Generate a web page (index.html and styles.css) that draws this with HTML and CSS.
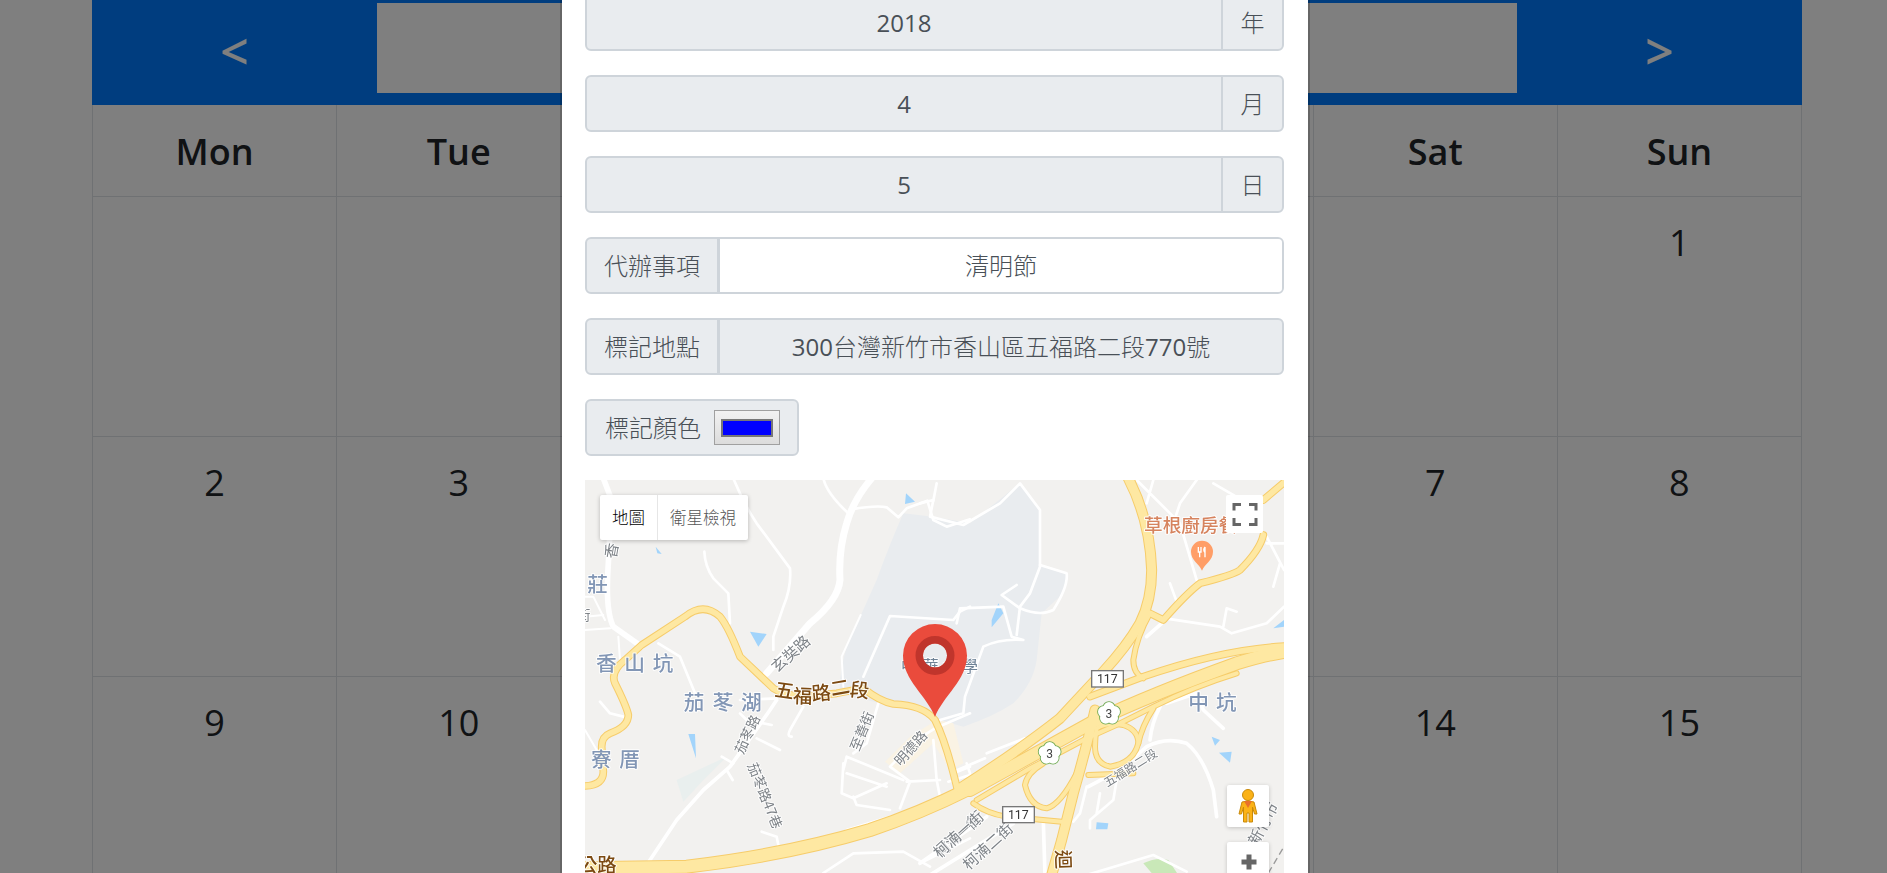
FILE: index.html
```html
<!DOCTYPE html>
<html lang="zh-Hant">
<head>
<meta charset="utf-8">
<title>行事曆</title>
<link rel="stylesheet" href="styles.css">
</head>
<body>
<main class="calendar">
  <header class="cal-head">
    <div class="cal-nav">&lt;</div>
    <div class="cal-title"></div>
    <div class="cal-nav">&gt;</div>
  </header>
  <section class="cal-grid">
    <div class="cell head">Mon</div><div class="cell head">Tue</div><div class="cell head">Wed</div><div class="cell head">Thu</div><div class="cell head">Fri</div><div class="cell head">Sat</div><div class="cell head">Sun</div>
    <div class="cell"></div><div class="cell"></div><div class="cell"></div><div class="cell"></div><div class="cell"></div><div class="cell"></div><div class="cell">1</div>
    <div class="cell">2</div><div class="cell">3</div><div class="cell">4</div><div class="cell">5</div><div class="cell">6</div><div class="cell">7</div><div class="cell">8</div>
    <div class="cell">9</div><div class="cell">10</div><div class="cell">11</div><div class="cell">12</div><div class="cell">13</div><div class="cell">14</div><div class="cell">15</div>
  </section>
</main>

<div class="backdrop"></div>

<div class="modal">
  <div class="modal-content">
    <div class="field"><div class="value num">2018</div><div class="addon addon-end">年</div></div>
    <div class="field"><div class="value num">4</div><div class="addon addon-end">月</div></div>
    <div class="field"><div class="value num">5</div><div class="addon addon-end">日</div></div>
    <div class="field"><div class="addon addon-start">代辦事項</div><div class="value value-edit">清明節</div></div>
    <div class="field"><div class="addon addon-start">標記地點</div><div class="value"><span class="num">300</span>台灣新竹市香山區五福路二段<span class="num">770</span>號</div></div>
    <div class="field field-color">
      <div class="addon addon-color">標記顏色<span class="swatch-btn"><span class="swatch"></span></span></div>
    </div>

    <div class="map">
      <svg class="map-canvas" width="699" height="393" viewBox="585 480 699 393" xmlns="http://www.w3.org/2000/svg">
        <defs>
          <g id="yroads">
            <g transform="translate(570 480) scale(.33333)">
              <path class="t2" d="M45 918Q100 915 100 875L95 800Q95 770 120 760Q175 740 175 705Q170 680 135 610Q120 575 165 540L215 495L345 410Q400 365 450 410Q475 440 510 530L610 625Q640 645 700 650L800 640L880 625Q930 665 970 672Q1060 675 1095 720Q1130 790 1165 940"/>
              <path class="t4" d="M45 1165L350 1160Q650 1125 900 1050Q1050 1000 1200 925"/>
            </g>
            <g transform="translate(920 480) scale(.33333)">
              <path class="t3" d="M625 -5Q690 120 695 270Q695 360 660 430Q620 500 550 575L420 715Q300 810 120 925"/>
              <path class="t1" d="M690 400Q650 470 640 540Q640 580 670 595"/>
              <path class="t2" d="M1095 498Q900 510 670 590L510 650"/>
              <path class="t4" d="M150 930L520 725Q700 640 950 550Q1030 525 1095 515"/>
              <path class="t1" d="M950 580Q820 620 700 680L600 730L500 775L330 865L170 960"/>
              <path class="t3" d="M525 690Q500 800 460 940L425 1080L395 1185"/>
              <path class="t1" d="M530 745Q560 725 610 735Q655 750 655 790Q640 850 570 860Q525 850 525 800Q525 775 530 745"/>
              <path class="t1" d="M700 685Q665 740 655 790"/>
              <path class="t1" d="M505 885L640 880"/>
              <path class="t1" d="M370 850Q320 880 315 915Q330 980 380 985Q420 975 470 880"/>
              <path class="t1" d="M160 970Q200 1000 260 1010L425 1025"/>
              <path class="t2" d="M1030 165Q1020 210 960 270Q940 285 840 310Q800 340 730 420L690 400"/>
              <path class="t2" d="M1095 5L1030 60"/>
            </g>
          </g>
          <g id="flower">
            <circle cx="0" cy="-17" r="17"/><circle cx="16" cy="-5" r="17"/><circle cx="10" cy="14" r="17"/><circle cx="-10" cy="14" r="17"/><circle cx="-16" cy="-5" r="17"/>
          </g>
        </defs>

        <rect class="land" x="585" y="480" width="699" height="393"/>

        <g transform="translate(920 480) scale(.33333)">
          <path class="campus" d="M-50 100Q-90 190 -130 300L-220 500Q-245 590 -240 640L-120 670L-10 690L60 720L130 740Q220 710 280 670Q340 610 350 540L365 400L430 340L445 285L360 255L360 90L300 10L150 130L40 110Z"/>
          <path class="campus-warm" d="M-105 845L-30 770L50 720L100 730L130 850L90 870L40 790L-60 880Z"/>
          <path class="green" d="M670 1150Q710 1130 745 1140L775 1185H700Z"/>
          <path class="water" d="M235 370L250 400L215 442L215 420ZM875 770L900 780L885 797ZM897 818L935 815L930 848ZM530 1027L565 1030L562 1048L528 1048ZM1060 445L1092 420V440Z"/>
        </g>
        <g transform="translate(570 480) scale(.33333)">
          <path class="water" d="M540 455L590 462L565 500ZM355 762L375 762L378 835ZM1008 40L1035 65L1005 72ZM257 200L275 222L262 220Z"/>
          <path class="marsh" d="M320 900L470 830L400 900L340 965Z"/>
        </g>

        <g class="wroads" transform="translate(570 480) scale(.33333)">
          <path class="w4" d="M100 -5L125 60L115 250Q105 390 130 440L215 500"/>
          <path class="w5" d="M905 -5Q850 60 830 130Q805 210 810 300Q805 360 720 430L590 580"/>
          <path class="w2" d="M490 -5Q520 70 560 130L660 265Q665 320 640 380L610 470L610 510"/>
          <path class="w2" d="M403 215Q405 260 430 295L475 340L480 430"/>
          <path class="w2" d="M760 -5Q770 40 835 100M845 88Q920 75 950 82L985 112L1010 85L1072 62L1090 120L1130 140L1200 118M1100 10L1090 62"/>
          <path class="w1" d="M820 620L815 530L872 405"/>
          <path class="w2" d="M880 590L960 408L1150 420L1170 395L1200 380"/>
          <path class="w2" d="M925 670L890 790L850 820"/>
          <path class="w2" d="M820 870L830 830L1000 900M820 850L815 940L850 955L950 910M830 880L950 920M850 950L860 975L960 990"/>
          <path class="w2" d="M1200 700L1095 745L1040 780L960 860L1020 905L990 985M1010 905L1110 900M1090 780L1100 900L1110 950M1150 880L1200 860M1135 905L1200 885"/>
          <path class="w3" d="M620 660L600 690L530 790L480 860L400 930L320 1020L230 1155"/>
          <path class="w2" d="M510 700L530 720L605 735M560 775L630 810M455 830L490 850L470 870L488 900M700 680L660 750Q650 770 665 770"/>
          <path class="w2" d="M575 1055L620 1070L630 1120M90 665L120 700L160 710M265 490L330 530L375 640M620 655L510 660"/>
          <path class="w1" d="M45 750L80 810M45 350L70 350L105 420M45 410L100 405M45 450L120 445M145 470L150 540"/>
          <path class="w2" d="M760 1179L850 1120L1000 1115L1080 1160M830 1050L960 1010M1050 1150L1200 1075"/>
        </g>
        <g class="wroads" transform="translate(920 480) scale(.33333)">
          <path class="w2" d="M0 70L40 60L30 110L130 135L240 70L300 10L360 90L360 260L330 340L300 380L290 465"/>
          <path class="w2" d="M360 255L440 280Q445 320 400 390Q360 410 300 385L245 345L290 315"/>
          <path class="w2" d="M120 385L250 380L275 470L310 480Q240 475 190 500L135 650L130 700L60 720M110 430L120 385"/>
          <path class="w3" d="M505 920L600 870L680 800Q740 770 800 790Q850 830 880 930L890 1010"/>
          <path class="w2" d="M650 0L780 130L830 300M700 0L680 70M830 0L780 70L760 130M880 10L1000 80M1040 170L1092 270M1080 250L1060 320M1040 190L1092 190"/>
          <path class="w2" d="M700 410L900 440L935 460L1040 430L1092 380M910 440L920 385L950 395M750 310L770 365"/>
          <path class="w3" d="M725 430L680 470"/>
          <path class="w3" d="M720 680Q695 730 690 780M740 670L830 640L850 690L910 745"/>
          <path class="w2" d="M500 920L480 1000L460 1025M590 900L580 960L510 1020L510 1045M540 940L530 1000"/>
          <path class="w2" d="M100 875L195 835M140 850L150 880M200 820L315 775"/>
          <path class="w3" d="M0 1150L200 1010M30 1185L280 1030M370 1025L375 1185"/>
          <path class="w2" d="M500 1185L700 1125L800 1175"/>
        </g>
        <use href="#yroads" class="yo"/>
        <use href="#yroads" class="yi"/>
        <g transform="translate(920 480) scale(.33333)">
          <path class="rail" d="M1045 1179L1092 1100"/>
        </g>

        <g class="labels" transform="translate(570 480) scale(.33333)">
          <text class="place" x="78 163 248" y="572">香山坑</text>
          <text class="place" x="341 428 513" y="690">茄苳湖</text>
          <text class="place" x="63 148" y="860">寮厝</text>
          <text class="place" x="52" y="337">莊</text>
          <text class="road" x="20" y="420">街</text>
          <text class="road road-l" transform="translate(137 238) rotate(-80)">香</text>
          <text class="road road-l" transform="translate(622 580) rotate(-42)">玄奘路</text>
          <text class="road" transform="translate(520 825) rotate(-65)">茄苳路</text>
          <text class="road" transform="translate(532 856) rotate(68)">茄苳路47巷</text>
          <text class="road" transform="translate(866 816) rotate(-68)">至善街</text>
          <text class="road" transform="translate(992 860) rotate(-48)">明德路</text>
          <text class="road" transform="translate(1115 1134) rotate(-42)">柯湳一街</text>
          <text class="brown" x="612 668 727 785 838" y="648 668 662 648 648" rotate="8 2 -5 -10 6">五福路二段</text>
          <text class="brown" x="24" y="1176">公路</text>
          <text class="campus-label" x="993 1058 1118 1176" y="576">中華大學</text>
        </g>
        <g class="labels" transform="translate(920 480) scale(.33333)">
          <text class="place" x="805 888" y="690">中坑</text>
          <text class="road road-s" transform="translate(562 922) rotate(-32)">五福路二段</text>
          <text class="road road-l" transform="translate(58 1136) rotate(-42)">柯湳一街</text>
          <text class="road road-l" transform="translate(146 1172) rotate(-42)">柯湳二街</text>
          <text class="road road-l" transform="translate(1012 1100) rotate(-62)">新竹市</text>
          <text class="poi" x="672" y="155">草根廚房餐</text>
          <text class="brown" transform="translate(408 1110) rotate(88)">迴</text>
          <path class="poi-pin" d="M846 272C838 250 813 242 813 215A33 33 0 0 1 879 215C879 242 854 250 846 272Z"/>
          <path class="poi-fork" d="M835 201V218M843 201V218M835 216H843M839 216V232M855 201V232M855 201Q848 210 855 218"/>
          <g class="shield"><rect x="515" y="572" width="95" height="49"/><text x="562" y="609">117</text></g>
          <g class="shield"><rect x="248" y="980" width="95" height="48"/><text x="295" y="1017">117</text></g>
          <g class="flower" transform="translate(567 700)"><use href="#flower" class="fl-o"/><use href="#flower" class="fl-i"/><text y="13">3</text></g>
          <g class="flower" transform="translate(389 820)"><use href="#flower" class="fl-o"/><use href="#flower" class="fl-i"/><text y="13">3</text></g>
        </g>
        <path class="pin" fill-rule="evenodd" d="M935 717C927 696 903 680 903 655.5A32 31.5 0 0 1 967 655.5C967 680 943 696 935 717ZM935 643.500A12 12 0 1 0 935 667.500A12 12 0 1 0 935 643.500Z"/>
        <path class="pin-ring" fill-rule="evenodd" d="M935 636A19.500 19.500 0 1 0 935 675A19.500 19.500 0 1 0 935 636ZM935 643.500A12 12 0 1 1 935 667.500A12 12 0 1 1 935 643.500Z"/>
      </svg>

      <div class="map-type">
        <span class="map-type-btn active">地圖</span><span class="map-type-btn">衛星檢視</span>
      </div>
      <div class="map-ctl map-full">
        <svg width="37" height="38" viewBox="0 0 37 38"><path d="M8 15.500V9.500H15M23 9.500H30V15.500M30 23V29.500H23M15 29.500H8V23"/></svg>
      </div>
      <div class="map-ctl map-peg">
        <svg width="42" height="42" viewBox="0 0 42 42">
          <circle class="peg" cx="21" cy="10" r="5.500"/>
          <path class="peg" d="M15 17Q21 15 27 17L30 29H27.500L25.500 22V37H22V28H20V37H16.500V22L14.500 29H12Z"/>
          <path class="peg-scarf" d="M17 16H25L21 23Z"/>
        </svg>
      </div>
      <div class="map-ctl map-zoom">
        <svg width="42" height="40" viewBox="0 0 42 40"><path d="M22 12.500V27.500M14.500 20H29.500"/></svg>
      </div>
    </div>
  </div>
</div>
</body>
</html>
```
FILE: styles.css
```css
* { box-sizing: border-box; }

html, body {
  margin: 0;
  height: 100%;
  overflow: hidden;
  background: #fff;
}

body {
  font-family: "Open Sans", "Noto Sans CJK TC", sans-serif;
  color: #212529;
}

.calendar {
  height: 873px;
  overflow: hidden;
  padding: 0 85px 0 92px;
}

.cal-head {
  display: flex;
  height: 105px;
  padding: 3px 0 12px;
  background: #007bff;
  color: #fff;
}

.cal-nav {
  flex: 0 0 285px;
  font-size: 50px;
  font-weight: 600;
  line-height: 97px;
  text-align: center;
}

.cal-title {
  flex: 1;
  background: #fff;
}

.cal-grid {
  display: grid;
  grid-template-columns: repeat(7, 1fr);
  grid-template-rows: 92px repeat(3, 240px);
  border-left: 1px solid #dee2e6;
}

.cell {
  padding-top: 19px;
  border-right: 1px solid #dee2e6;
  border-bottom: 1px solid #dee2e6;
  font-size: 36px;
  line-height: 54px;
  text-align: center;
}

.cell.head {
  padding-top: 20px;
  font-weight: 600;
}

.backdrop {
  position: fixed;
  inset: 0;
  background: rgba(0, 0, 0, .5);
}

.modal {
  position: fixed;
  inset: 0;
  overflow: hidden;
  padding-left: 560px;
}

.modal-content {
  width: 750px;
  height: 879px;
  margin-top: -6px;
  padding: 0 24px 0 23px;
  border-left: 2px solid rgba(0, 0, 0, .2);
  border-right: 2px solid rgba(0, 0, 0, .2);
  background: #fff;
  background-clip: padding-box;
}

.field {
  display: flex;
  height: 57px;
  margin-bottom: 24px;
  border: 2px solid #ced4da;
  border-radius: 6px;
  overflow: hidden;
  font-size: 24px;
  font-weight: 300;
  color: #495057;
  background: #e9ecef;
}

.value {
  flex: 1;
  line-height: 53px;
  text-align: center;
}

.num {
  font-weight: 400;
}

.value-edit {
  background: #fff;
}

.addon {
  line-height: 53px;
  text-align: center;
  flex: none;
}

.addon-end {
  width: 61px;
  border-left: 2px solid #ced4da;
}

.addon-start {
  width: 133px;
  border-right: 3px solid #ced4da;
}

.field-color {
  width: 214px;
}

.addon-color {
  display: flex;
  align-items: center;
  gap: 12px;
  padding-left: 18px;
}

.swatch-btn {
  display: flex;
  align-items: center;
  justify-content: center;
  width: 66px;
  height: 35px;
  margin-left: 1px;
  border: 1px solid #a0a0a0;
  background: linear-gradient(#f2f2f2, #dcdcdc);
}

.swatch {
  width: 52px;
  height: 18px;
  background: #0000ff;
  border: 2px solid #777;
}

.map {
  position: relative;
  height: 393px;
  overflow: hidden;
  background: #f2f1ef;
}

.map-canvas {
  display: block;
  filter: blur(.6px);
  font-family: "Noto Sans CJK TC", "Noto Sans", sans-serif;
}

.land { fill: #f2f1ef; }
.campus { fill: #e9ecef; }
.campus-warm { fill: #faf3e4; }
.green { fill: #c9e8b8; }
.water { fill: #a2d4fb; }
.marsh { fill: #e9efee; }

.wroads path {
  fill: none;
  stroke: #fff;
  stroke-linecap: round;
  stroke-linejoin: round;
}

.w1 { stroke-width: 6px; }
.w2 { stroke-width: 8px; }
.w3 { stroke-width: 11px; }
.w4 { stroke-width: 17px; }
.w5 { stroke-width: 21px; }

#yroads path {
  fill: none;
  stroke-linecap: round;
  stroke-linejoin: round;
}

.yo { --e: 6px; stroke: #f6cc6a; }
.yi { --e: 0px; stroke: #fee8a2; }

.t1 { stroke-width: calc(12px + var(--e)); }
.t2 { stroke-width: calc(17px + var(--e)); }
.t3 { stroke-width: calc(27px + var(--e)); }
.t4 { stroke-width: calc(36px + var(--e)); }

.rail {
  fill: none;
  stroke: #9a9a9a;
  stroke-width: 4px;
  stroke-dasharray: 20 12;
}

.labels text {
  paint-order: stroke;
  stroke: rgba(255, 255, 255, .85);
  stroke-width: 6px;
  stroke-linejoin: round;
}

.labels .place { font-size: 62px; font-weight: 500; fill: #8296b5; }
.labels .road { font-size: 41px; fill: #7d8287; }
.labels .road-l { font-size: 46px; }
.labels .road-s { font-size: 36px; }
.labels .brown { font-size: 58px; font-weight: 500; fill: #7c4a12; }
.labels .poi { font-size: 56px; font-weight: 500; fill: #d6835e; }
.labels .campus-label { font-size: 48px; fill: #6e8296; }

.poi-pin { fill: #ff9e67; }

.poi-fork {
  fill: none;
  stroke: #fff;
  stroke-width: 4px;
}

.shield rect {
  fill: #fff;
  stroke: #777;
  stroke-width: 4px;
}

.labels .shield text {
  font-family: "Roboto", sans-serif;
  font-size: 37px;
  fill: #333;
  stroke: none;
  text-anchor: middle;
}

.fl-o { fill: #6da84f; stroke: #6da84f; stroke-width: 5px; }
.fl-i { fill: #fff; }

.labels .flower text {
  font-family: "Roboto", sans-serif;
  font-size: 36px;
  fill: #444;
  stroke: none;
  text-anchor: middle;
}

.pin { fill: #ea4b3c; }
.pin-ring { fill: #c0352c; }

.map-type {
  position: absolute;
  top: 15px;
  left: 15px;
  display: flex;
  height: 45px;
  background: #fff;
  border-radius: 2px;
  box-shadow: 0 1px 4px rgba(0, 0, 0, .25);
  font-family: "Noto Sans CJK TC", sans-serif;
  font-size: 16.5px;
  font-weight: 300;
  line-height: 45px;
  color: #565656;
}

.map-type-btn {
  padding: 0 12px;
  border-left: 1px solid #e6e6e6;
}

.map-type-btn.active {
  border-left: 0;
  color: #000;
}

.map-ctl {
  position: absolute;
  background: #fff;
  border-radius: 2px;
}

.map-ctl svg { display: block; }

.map-full {
  top: 15px;
  left: 641px;
  width: 37px;
  height: 38px;
}

.map-full path {
  fill: none;
  stroke: #666;
  stroke-width: 3px;
}

.map-peg {
  top: 305px;
  left: 642px;
  width: 42px;
  height: 42px;
  box-shadow: 0 1px 4px rgba(0, 0, 0, .2);
}

.peg { fill: #fbb217; stroke: #c98a0a; stroke-width: 1px; }
.peg-scarf { fill: #e8702a; }

.map-zoom {
  top: 362px;
  left: 642px;
  width: 42px;
  height: 60px;
  box-shadow: 0 1px 4px rgba(0, 0, 0, .2);
}

.map-zoom path {
  fill: none;
  stroke: #666;
  stroke-width: 5px;
}
```
